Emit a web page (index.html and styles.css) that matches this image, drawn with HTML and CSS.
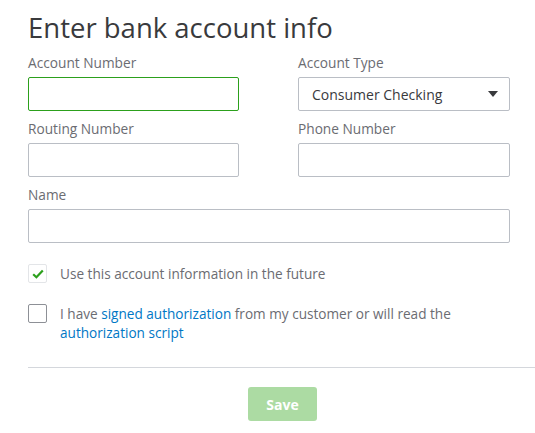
FILE: index.html
```html
<!DOCTYPE html>
<html>
<head>
<meta charset="utf-8">
<link rel="stylesheet" href="styles.css">
</head>
<body>
<div class="page">
  <h1 class="title">Enter bank account info</h1>
  <div class="grid">
    <div class="field">
      <label class="label">Account Number</label>
      <div class="input focused"></div>
    </div>
    <div class="field">
      <label class="label">Account Type</label>
      <div class="input select">
        <span class="select-text">Consumer Checking</span>
        <svg class="caret" width="10" height="6" viewBox="0 0 10 6"><path d="M0 0 H10 L5 6 Z" fill="#393a3d"/></svg>
      </div>
    </div>
    <div class="field">
      <label class="label">Routing Number</label>
      <div class="input"></div>
    </div>
    <div class="field">
      <label class="label">Phone Number</label>
      <div class="input"></div>
    </div>
    <div class="field wide">
      <label class="label">Name</label>
      <div class="input"></div>
    </div>
  </div>
  <div class="check-row first">
    <span class="box light">
      <svg width="12" height="10" viewBox="0 0 12 10"><path d="M1.2 5.2 L4.4 8.2 L10.8 1.4" fill="none" stroke="#2ca01c" stroke-width="2.2"/></svg>
    </span>
    <span class="check-text">Use this account information in the future</span>
  </div>
  <div class="check-row second">
    <span class="box"></span>
    <span class="check-text">I have <a class="link">signed authorization</a> from my customer or will read the <a class="link">authorization script</a></span>
  </div>
  <div class="divider"></div>
  <div class="actions">
    <button class="save">Save</button>
  </div>
</div>
</body>
</html>
```
FILE: styles.css
```css
html, body {
  margin: 0;
  padding: 0;
  background: #fff;
  overflow: hidden;
}
body {
  font-family: "Open Sans", "Noto Sans", sans-serif;
  color: #393a3d;
}
.page {
  padding-left: 28px;
  width: 509px;
}
.title {
  margin: 0;
  padding-top: 10px;
  font-size: 27.5px;
  font-weight: 400;
  line-height: 36px;
  color: #393a3d;
}
.grid {
  display: grid;
  grid-template-columns: 211px 212px;
  column-gap: 59px;
  margin-top: 8px;
  width: 482px;
}
.wide {
  grid-column: 1 / 3;
}
.field {
  display: flex;
  flex-direction: column;
  margin-bottom: 9px;
}
.label {
  font-size: 13.7px;
  line-height: 18px;
  color: #6b6c72;
  margin-bottom: 5px;
}
.input {
  height: 34px;
  box-sizing: border-box;
  border: 1px solid #babec5;
  border-radius: 2px;
  background: #fff;
}
.input.focused {
  border-color: #2ca01c;
}
.select {
  display: flex;
  align-items: center;
  justify-content: space-between;
  padding: 0 11px 0 13px;
}
.select-text {
  font-size: 14px;
  color: #393a3d;
}
.caret {
  display: block;
}
.check-row {
  display: flex;
  align-items: flex-start;
  font-size: 13.6px;
  line-height: 19px;
  color: #6b6c72;
}
.check-row.first {
  margin-top: 12px;
}
.check-row.second {
  margin-top: 21px;
}
.box {
  flex: none;
  width: 19px;
  height: 19px;
  box-sizing: border-box;
  border: 1px solid #8d9096;
  border-radius: 2px;
  margin-right: 13px;
  display: flex;
  align-items: center;
  justify-content: center;
}
.box.light {
  border-color: #e3e5e8;
}
.check-text {
  width: 420px;
}
.link {
  color: #0077c5;
  text-decoration: none;
}
.divider {
  height: 1px;
  background: #d4d7dc;
  margin-top: 25px;
}
.actions {
  display: flex;
  justify-content: center;
  margin-top: 19px;
}
.save {
  width: 69px;
  height: 34px;
  border: none;
  border-radius: 3px;
  background: #acdba3;
  color: #fff;
  font-family: "Open Sans", "Noto Sans", sans-serif;
  font-weight: 700;
  font-size: 14px;
  padding: 0;
}
```
